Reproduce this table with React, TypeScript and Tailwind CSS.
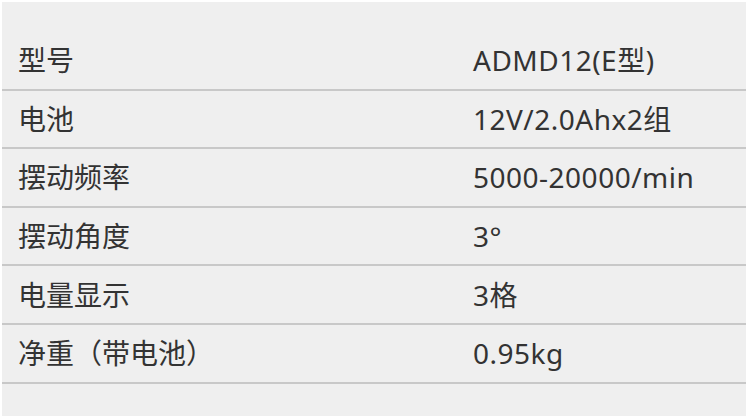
const specs = [
  { label: "型号", value: "ADMD12(E型)" },
  { label: "电池", value: "12V/2.0Ahx2组" },
  { label: "摆动频率", value: "5000-20000/min" },
  { label: "摆动角度", value: "3°" },
  { label: "电量显示", value: "3格" },
  { label: "净重（带电池）", value: "0.95kg" },
];

export default function App() {
  return (
    <div className="w-[750px] h-[419px] bg-white p-[2px] pr-[4px] pb-[3px]">
      <div
        className="h-full bg-[#efefef] pt-[30px] text-[#333333] text-[28px]"
        style={{ fontFamily: '"Noto Sans", "Noto Sans CJK SC", sans-serif' }}
      >
        {specs.map((row) => (
          <div
            key={row.label}
            className="grid grid-cols-[455px_1fr] items-center h-[58.6px] border-b-2 border-[#c8c8c8]"
          >
            <div className="pl-[16px] leading-none">{row.label}</div>
            <div className="pl-[16px] leading-none tracking-[0.5px]">{row.value}</div>
          </div>
        ))}
      </div>
    </div>
  );
}
